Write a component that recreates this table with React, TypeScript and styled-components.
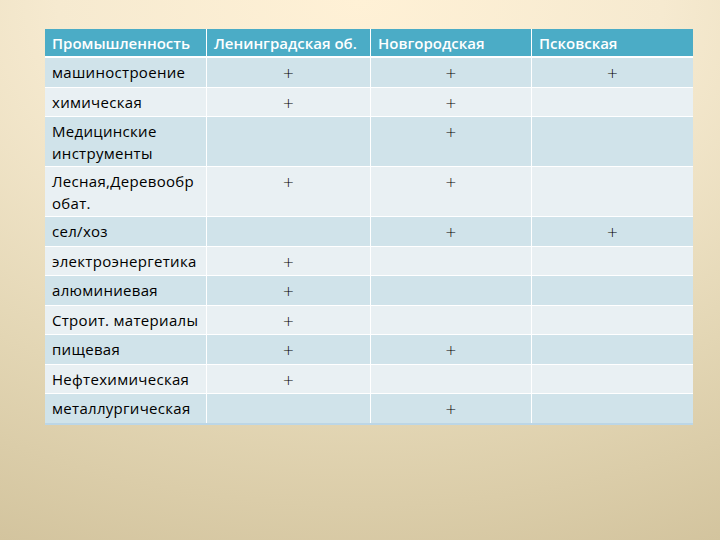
import React from "react";
import styled, { createGlobalStyle } from "styled-components";

const Global = createGlobalStyle`
  html, body { margin: 0; padding: 0; }
  body {
    width: 720px; height: 540px; overflow: hidden;
    font-family: "Open Sans", "Noto Sans", sans-serif;
    background: radial-gradient(ellipse 120% 110% at 50% 0%, #fff1d6 0%, #f6ead0 35%, #e3d6b4 70%, #d3c49e 100%);
  }
`;

const Page = styled.div`
  width: 720px;
  height: 540px;
  padding: 29px 27px 0 45px;
  box-sizing: border-box;
`;

const Table = styled.div`
  display: grid;
  grid-template-columns: 161px 164px 161px 162px;
  width: 648px;
  border-bottom: 2px solid #bcd6e6;
`;

const HeadCell = styled.div`
  background: #4bacc6;
  color: #ffffff;
  font-weight: 600;
  font-size: 15px;
  height: 28px;
  line-height: 28px;
  padding-left: 7px;
  white-space: nowrap;
  border-left: 1px solid #ffffff;
  box-sizing: border-box;
  border-bottom: 1px solid #ffffff;
  &:first-child { border-left: none; }
`;

const Cell = styled.div<{ $dark: boolean; $tall: boolean; $center?: boolean; $first?: boolean }>`
  background: ${(p) => (p.$dark ? "#d0e3ea" : "#e9f0f3")};
  color: #000;
  font-size: 15px;
  line-height: 22px;
  letter-spacing: 0.3px;
  height: ${(p) => (p.$tall ? "50px" : "29.5px")};
  box-sizing: border-box;
  padding: 3px 7px 0;
  border-left: ${(p) => (p.$first ? "none" : "1px solid #ffffff")};
  border-top: 1px solid #ffffff;
  text-align: ${(p) => (p.$center ? "center" : "left")};
  white-space: nowrap;
`;

const Plus = styled.span`
  font-family: "DejaVu Sans", sans-serif;
  font-size: 14px;
  font-weight: 300;
  color: #000;
`;

type Row = { name: string[]; c: [boolean, boolean, boolean] };

const rows: Row[] = [
  { name: ["машиностроение"], c: [true, true, true] },
  { name: ["химическая"], c: [true, true, false] },
  { name: ["Медицинские", "инструменты"], c: [false, true, false] },
  { name: ["Лесная,Деревообр", "обат."], c: [true, true, false] },
  { name: ["сел/хоз"], c: [false, true, true] },
  { name: ["электроэнергетика"], c: [true, false, false] },
  { name: ["алюминиевая"], c: [true, false, false] },
  { name: ["Строит. материалы"], c: [true, false, false] },
  { name: ["пищевая"], c: [true, true, false] },
  { name: ["Нефтехимическая"], c: [true, false, false] },
  { name: ["металлургическая"], c: [false, true, false] },
];

const headers = ["Промышленность", "Ленинградская об.", "Новгородская", "Псковская"];

export default function App() {
  return (
    <>
      <Global />
      <Page>
        <Table>
          {headers.map((h) => (
            <HeadCell key={h}>{h}</HeadCell>
          ))}
          {rows.map((r, i) => {
            const dark = i % 2 === 0;
            const tall = r.name.length > 1;
            return (
              <React.Fragment key={i}>
                <Cell $dark={dark} $tall={tall} $first>
                  {r.name.map((n, k) => (
                    <div key={k}>{n}</div>
                  ))}
                </Cell>
                {r.c.map((v, j) => (
                  <Cell key={j} $dark={dark} $tall={tall} $center>
                    {v ? <Plus>+</Plus> : null}
                  </Cell>
                ))}
              </React.Fragment>
            );
          })}
        </Table>
      </Page>
    </>
  );
}
